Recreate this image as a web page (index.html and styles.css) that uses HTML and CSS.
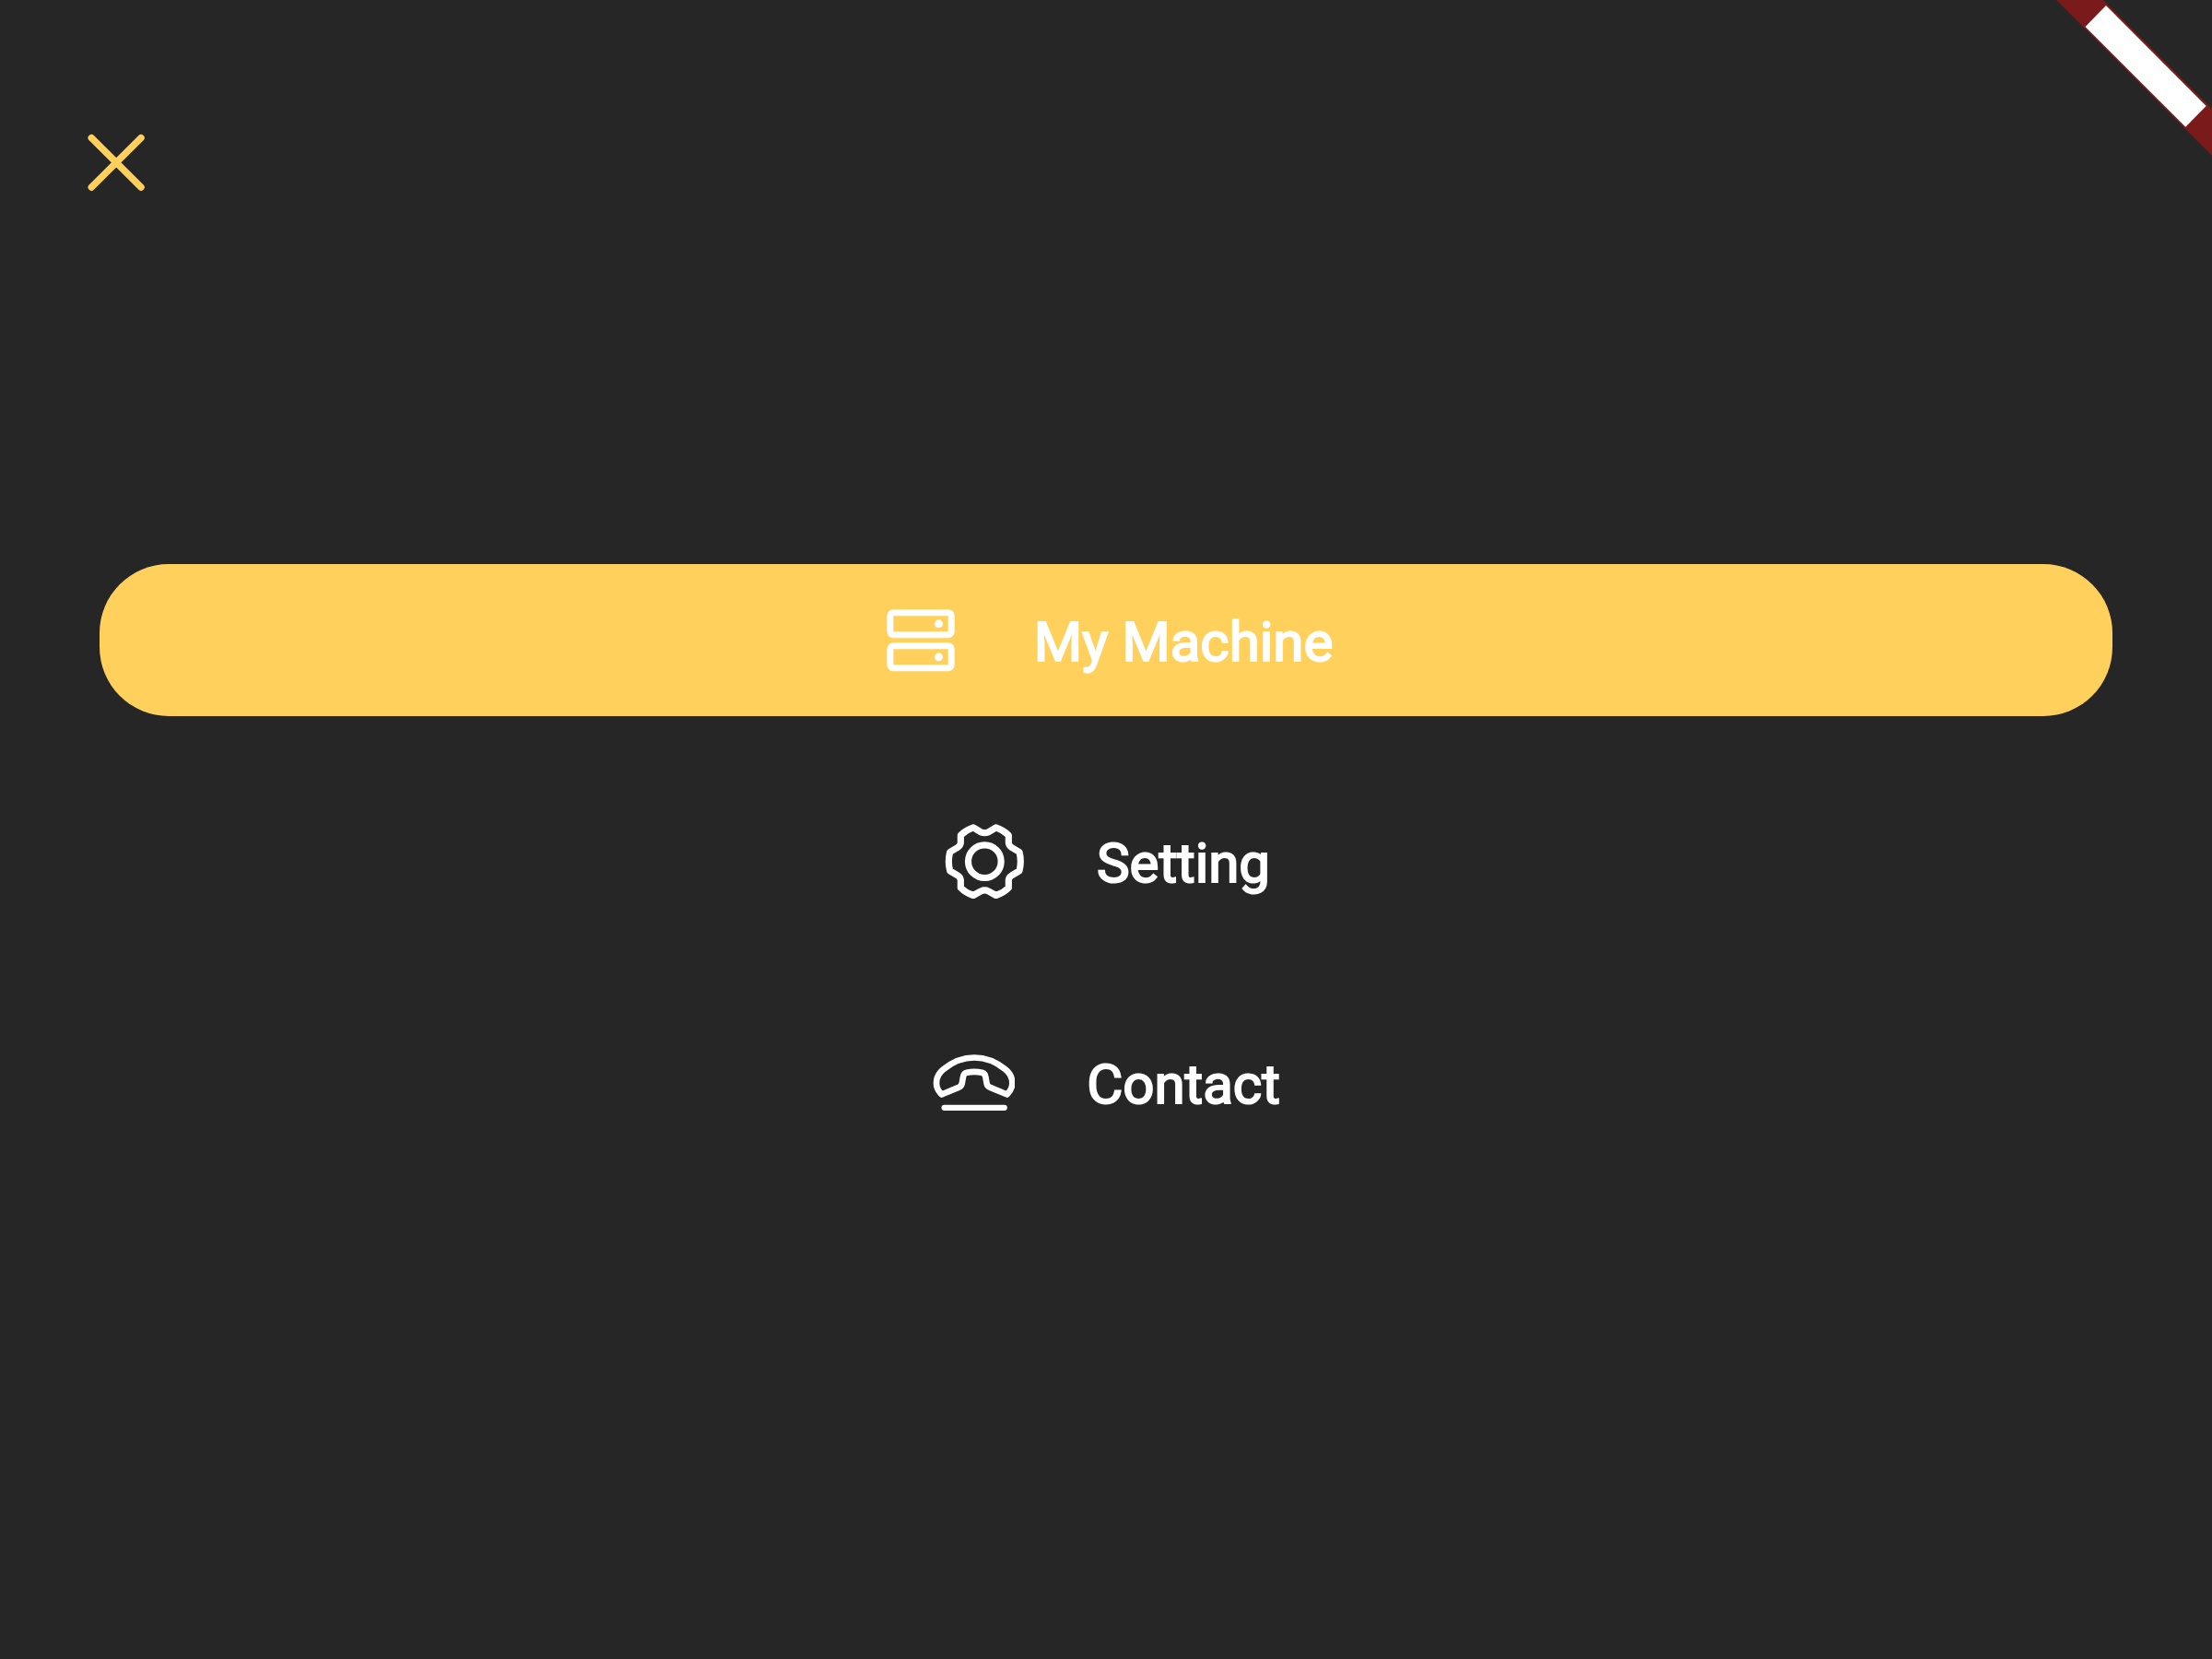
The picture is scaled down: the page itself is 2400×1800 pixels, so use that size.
FILE: index.html
```html
<!DOCTYPE html>
<html lang="en">
<head>
<meta charset="utf-8">
<meta name="viewport" content="width=device-width, initial-scale=1">
<title>Menu</title>
<link rel="stylesheet" href="styles.css">
</head>
<body>
<header class="header">
  <button class="close" type="button" aria-label="Close menu">
    <svg class="icon" viewBox="0 0 90 90" fill="none" stroke="currentColor" stroke-width="7.5" stroke-linecap="round" aria-hidden="true">
      <path d="M18.3 17.7 72 71.2M72 17.7 18.3 71.2"/>
    </svg>
  </button>
</header>
<nav class="menu" aria-label="Main">
  <a class="item item-active" href="#machine" aria-current="page">
    <svg class="icon" viewBox="42 29.5 270 270" fill="none" stroke="currentColor" stroke-width="21" aria-hidden="true">
      <rect x="77.5" y="73.5" width="199" height="72" rx="10"/>
      <rect x="77.5" y="181.5" width="199" height="72" rx="10"/>
      <g fill="currentColor" stroke="none">
        <circle cx="235.5" cy="110" r="13.5"/>
        <circle cx="235.5" cy="218" r="13.5"/>
      </g>
    </svg>
    <span class="label">My Machine</span>
  </a>
  <a class="item" href="#setting">
    <svg class="icon" viewBox="35 29.5 270 270" fill="none" stroke="currentColor" stroke-width="21.5" stroke-linejoin="round" aria-hidden="true">
      <circle cx="174" cy="163.5" r="53.5"/>
      <path d="M162 68 Q174 73 186 68 L211 53 Q235 61 252 78 L252 103 Q253 113 262 118 L287 133 Q295 164 287 194 L262 209 Q253 214 252 224 L252 249 Q235 266 211 274 L186 260 Q174 254 162 260 L137 274 Q113 266 96 249 L96 224 Q95 214 86 209 L61 194 Q53 164 61 133 L86 118 Q95 113 96 103 L96 78 Q113 61 137 53 Z"/>
    </svg>
    <span class="label">Setting</span>
  </a>
  <a class="item" href="#contact">
    <svg class="icon" viewBox="34 -0.5 270 270" fill="none" stroke="currentColor" stroke-width="20" stroke-linejoin="round" stroke-linecap="round" aria-hidden="true">
      <path d="M66 172 Q49 155 49 135 Q49 108 72 90 Q118 52 172.5 52 Q227 52 273 90 Q296 108 296 135 Q296 155 279 172 L224 149 Q215 146 213 137 L209 115 Q208 104 197 101 Q172 95 148 101 Q137 104 136 115 L132 137 Q130 146 121 149 Z"/>
      <path d="M75 215H270" stroke-width="19"/>
    </svg>
    <span class="label">Contact</span>
  </a>
</nav>
<svg class="ribbon" viewBox="0 0 170 170" aria-hidden="true">
  <path fill="#7a1a1b" d="M1 0H52L170 118V169Z"/>
  <path fill="#fff" d="M55 6 163.700 115 141.300 137.700 32.500 29Z"/>
</svg>
</body>
</html>
```
FILE: styles.css
```css
* {
  box-sizing: border-box;
}

body {
  margin: 0;
  min-height: 100vh;
  background: #262626;
  color: #fff;
  font-family: Roboto, "Liberation Sans", sans-serif;
  overflow-x: hidden;
}

.header {
  display: flex;
  padding: 132px 81px 0;
}

.close {
  display: flex;
  padding: 0;
  border: 0;
  background: none;
  color: #ffd05c;
  cursor: pointer;
}

.icon {
  flex: none;
  width: 90px;
  height: 90px;
}

.menu {
  display: flex;
  flex-direction: column;
  gap: 75px;
  margin-top: 390px;
  padding: 0 4.5% 75px;
}

.item {
  display: flex;
  align-items: center;
  justify-content: center;
  gap: 78px;
  min-height: 165px;
  border-radius: 75px;
  color: inherit;
  text-decoration: none;
}

.item-active {
  background: #ffd05c;
}

.label {
  padding-top: 4px;
  font-size: 60px;
  line-height: 70px;
  -webkit-text-stroke: 2px currentColor;
}

.ribbon {
  position: absolute;
  top: 0;
  right: 0;
  width: 170px;
  height: 170px;
}
```
